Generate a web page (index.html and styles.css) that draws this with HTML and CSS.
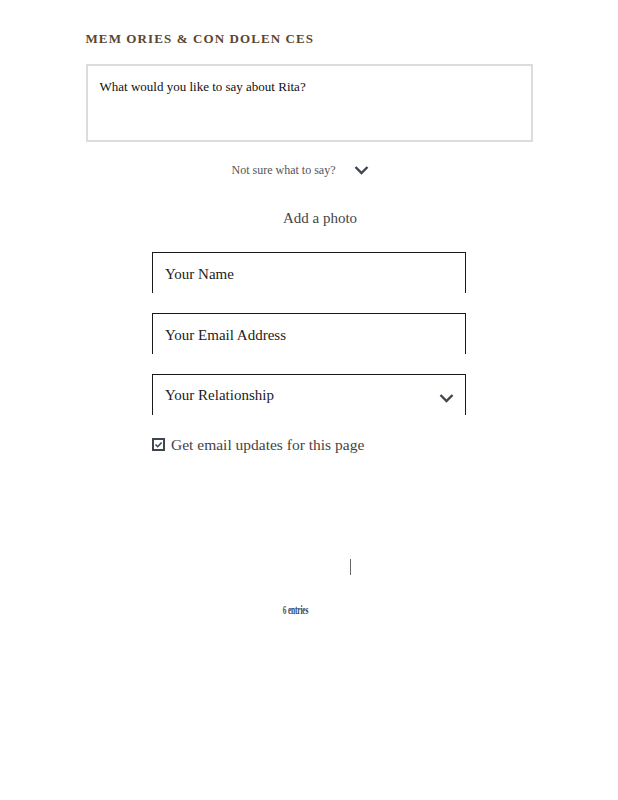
FILE: index.html
```html
<!DOCTYPE html>
<html>
<head>
  <title>Memories &amp; Condolences</title>
  <link rel="stylesheet" href="styles.css">
</head>
<body>
  <div class="container">
    <h2 class="section-title">MEM ORIES &amp; CON DOLEN CES</h2>
    <div class="message-box">What would you like to say about Rita?</div>

    <div class="prompt-toggle">
      <span>Not sure what to say?</span>
      <svg class="chevron" width="15" height="10" viewBox="0 0 15 10">
        <path d="M1.5 2 L7.5 8 L13.5 2" fill="none" stroke="#3d4651" stroke-width="2.4"/>
      </svg>
    </div>

    <div class="add-photo">Add a photo</div>

    <div class="form-fields">
      <div class="field">Your Name</div>
      <div class="field">Your Email Address</div>
      <div class="field field-select">
        <span>Your Relationship</span>
        <svg class="chevron" width="15" height="10" viewBox="0 0 15 10">
          <path d="M1.5 2 L7.5 8 L13.5 2" fill="none" stroke="#3d4651" stroke-width="2.4"/>
        </svg>
      </div>
      <label class="updates">
        <span class="checkbox">
          <svg width="13" height="13" viewBox="0 0 13 13">
            <rect x="1" y="1" width="11" height="11" fill="none" stroke="#3d4651" stroke-width="2"/>
            <path d="M3.5 6.5 L5.7 8.7 L9.6 4.5" fill="none" stroke="#3d4651" stroke-width="1.6"/>
          </svg>
        </span>
        Get email updates for this page
      </label>
    </div>

    <div class="divider-row"><span class="divider"></span></div>

    <div class="entries"><span class="entries-text"><span class="count">6</span> entries</span></div>
  </div>
</body>
</html>
```

FILE: styles.css
```css
body {
  margin: 0;
  font-family: "Liberation Serif", "Times New Roman", serif;
  background: #fff;
  color: #222;
}

.container {
  width: 447px;
  margin: 0 auto;
  padding-top: 30px;
}

.section-title {
  margin: 0 0 17px 0;
  font-size: 13px;
  line-height: 17px;
  font-weight: bold;
  letter-spacing: 1.1px;
  color: #5a4631;
}

.message-box {
  border: 2px solid #dcdcdc;
  padding: 12px 12px 0 12px;
  height: 62px;
  font-size: 13px;
  line-height: 17px;
  color: #111;
}

.prompt-toggle {
  display: flex;
  justify-content: center;
  align-items: center;
  gap: 19px;
  margin-top: 20px;
  padding-right: 17px;
  font-size: 12px;
  line-height: 16px;
  color: #555;
}

.add-photo {
  margin-top: 31px;
  text-align: center;
  padding-left: 22px;
  font-size: 15px;
  line-height: 19px;
  color: #444;
}

.form-fields {
  width: 314px;
  margin: 24px auto 0 auto;
}

.field {
  height: 40px;
  border: 1px solid #1a1a1a;
  border-bottom: none;
  padding: 0 12px;
  font-size: 15px;
  line-height: 42px;
  color: #222;
  margin-bottom: 20px;
}

.field-select {
  display: flex;
  justify-content: space-between;
  align-items: center;
}

.field-select .chevron {
  margin-top: 6px;
  margin-right: -1px;
}

.updates {
  display: flex;
  align-items: center;
  gap: 6px;
  margin-top: 3px;
  font-size: 15.5px;
  line-height: 19px;
  color: #444;
}

.checkbox {
  display: flex;
}

.divider-row {
  display: flex;
  justify-content: center;
  margin-top: 105px;
  padding-left: 83px;
}

.divider {
  width: 1px;
  height: 16px;
  background: #666;
}

.entries {
  margin-top: 28px;
  text-align: center;
  padding-right: 27px;
  font-size: 12px;
  line-height: 14px;
  font-weight: bold;
  color: #2f4560;
}

.entries-text {
  display: inline-block;
  transform: scaleX(0.62);
  letter-spacing: -0.3px;
}

.count {
  color: #7a5230;
}
```
